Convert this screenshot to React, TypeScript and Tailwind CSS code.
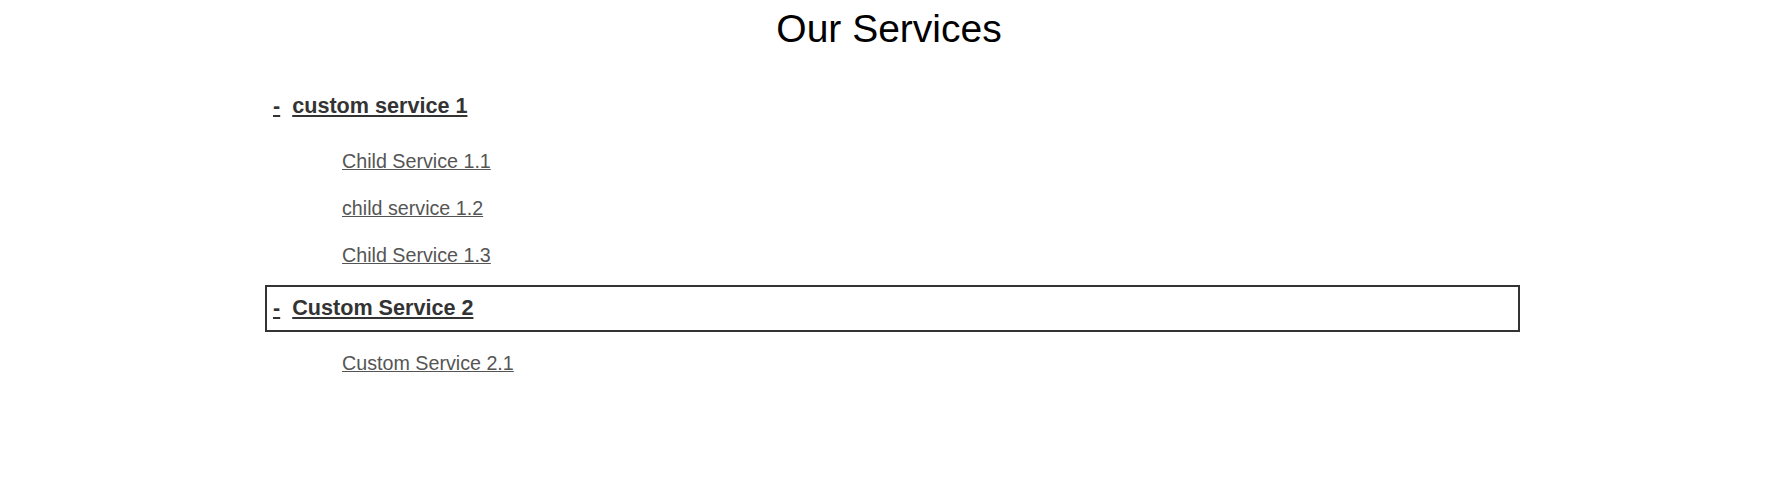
const services = [
  {
    title: "custom service 1",
    children: ["Child Service 1.1", "child service 1.2", "Child Service 1.3"],
  },
  {
    title: "Custom Service 2",
    children: ["Custom Service 2.1"],
    active: true,
  },
];

export default function App() {
  return (
    <div className="min-h-screen bg-white font-['Liberation_Sans',Arial,sans-serif]">
      <h1 className="pt-[9px] text-center text-[39px] leading-[40px] text-black">
        Our Services
      </h1>

      <ul className="ml-[265px] mt-[34px] w-[1255px]">
        {services.map((service) => (
          <li key={service.title}>
            <div
              className={
                "flex h-[47px] items-center border-2 px-[6px] " +
                (service.active ? "border-[#333]" : "border-transparent")
              }
            >
              <a
                href="#"
                className="flex text-[21.6px] font-bold text-[#333] underline"
              >
                <span>-</span>
                <span className="ml-[12px]">{service.title}</span>
              </a>
            </div>
            <ul className="pb-[6px] pt-[8px]">
              {service.children.map((child) => (
                <li key={child} className="py-[10px] pl-[77px]">
                  <a
                    href="#"
                    className="text-[19.7px] leading-[26px] text-[#555] underline"
                  >
                    {child}
                  </a>
                </li>
              ))}
            </ul>
          </li>
        ))}
      </ul>
    </div>
  );
}
